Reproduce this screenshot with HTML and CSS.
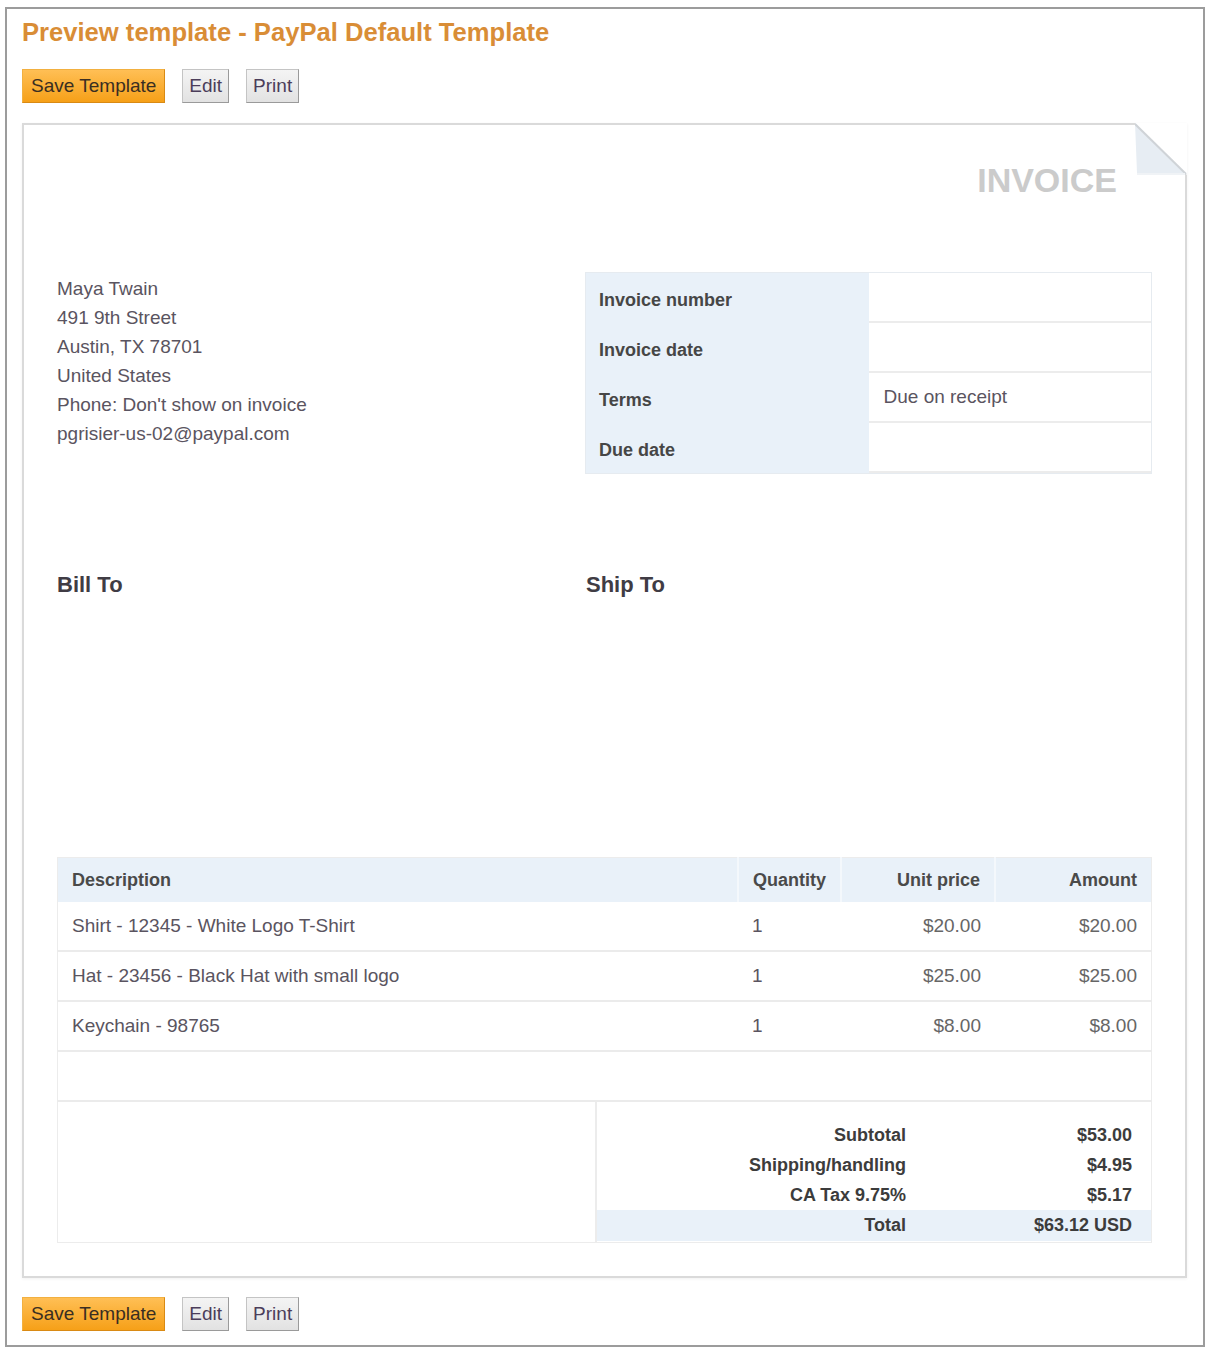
FILE: index.html
```html
<!DOCTYPE html>
<html lang="en">
<head>
    <meta charset="UTF-8">
    <title>Preview template - PayPal Default Template</title>
    <link rel="stylesheet" href="styles.css">
</head>
<body>
    <div class="frame">
        <h1 class="page-title">Preview template - PayPal Default Template</h1>
        <div class="toolbar">
            <button class="btn btn-primary">Save Template</button>
            <button class="btn">Edit</button>
            <button class="btn">Print</button>
        </div>

        <div class="paper">
            <svg class="dog-ear" width="52" height="52" viewBox="0 0 52 52">
                <polygon points="0,0 52,0 52,52" fill="#ffffff"/>
                <polygon points="0,0 50,50 2,50" fill="#e7edf3"/>
                <line x1="0" y1="1" x2="51" y2="51" stroke="#cfd3d7" stroke-width="2"/>
                <line x1="2" y1="51" x2="50" y2="51" stroke="#f0f3f6" stroke-width="2"/>
            </svg>

            <div class="invoice-word">INVOICE</div>

            <div class="top-grid">
                <div class="address">
                    <div>Maya Twain</div>
                    <div>491 9th Street</div>
                    <div>Austin, TX 78701</div>
                    <div>United States</div>
                    <div>Phone: Don't show on invoice</div>
                    <div>pgrisier-us-02@paypal.com</div>
                </div>
                <div class="info">
                    <div class="info-label">Invoice number</div>
                    <div class="info-value"></div>
                    <div class="info-label">Invoice date</div>
                    <div class="info-value"></div>
                    <div class="info-label">Terms</div>
                    <div class="info-value">Due on receipt</div>
                    <div class="info-label">Due date</div>
                    <div class="info-value"></div>
                </div>
            </div>

            <div class="parties">
                <h3>Bill To</h3>
                <h3>Ship To</h3>
            </div>

            <table class="items">
                <thead>
                    <tr>
                        <th class="col-desc">Description</th>
                        <th class="col-qty">Quantity</th>
                        <th class="col-price">Unit price</th>
                        <th class="col-amount">Amount</th>
                    </tr>
                </thead>
                <tbody>
                    <tr>
                        <td>Shirt - 12345 - White Logo T-Shirt</td>
                        <td>1</td>
                        <td class="num">$20.00</td>
                        <td class="num">$20.00</td>
                    </tr>
                    <tr>
                        <td>Hat - 23456 - Black Hat with small logo</td>
                        <td>1</td>
                        <td class="num">$25.00</td>
                        <td class="num">$25.00</td>
                    </tr>
                    <tr>
                        <td>Keychain - 98765</td>
                        <td>1</td>
                        <td class="num">$8.00</td>
                        <td class="num">$8.00</td>
                    </tr>
                    <tr class="empty-row">
                        <td colspan="4"></td>
                    </tr>
                </tbody>
            </table>

            <div class="totals">
                <div class="totals-note"></div>
                <div class="totals-box">
                    <div class="t-label">Subtotal</div>
                    <div class="t-value">$53.00</div>
                    <div class="t-label">Shipping/handling</div>
                    <div class="t-value">$4.95</div>
                    <div class="t-label">CA Tax 9.75%</div>
                    <div class="t-value">$5.17</div>
                    <div class="t-label t-total">Total</div>
                    <div class="t-value t-total">$63.12 USD</div>
                </div>
            </div>
        </div>

        <div class="toolbar toolbar-bottom">
            <button class="btn btn-primary">Save Template</button>
            <button class="btn">Edit</button>
            <button class="btn">Print</button>
        </div>
    </div>
</body>
</html>
```

FILE: styles.css
```css
body {
    margin: 0;
    background-color: #ffffff;
    font-family: 'Liberation Sans', Arial, sans-serif;
    color: #5a5460;
}
.frame {
    margin: 7px 2px 2px 5px;
    border: 2px solid #9c9c9c;
    padding: 8px 16px 14px 15px;
}
.page-title {
    margin: 0;
    font-size: 25.6px;
    line-height: 30px;
    font-weight: bold;
    color: #d98d36;
}
.toolbar {
    display: flex;
    gap: 17px;
    margin-top: 22px;
    margin-bottom: 20px;
}
.toolbar-bottom {
    margin-top: 19px;
    margin-bottom: 0;
}
.btn {
    height: 34px;
    padding: 0 6px;
    font-family: 'Liberation Sans', Arial, sans-serif;
    font-size: 19px;
    color: #4b3d5a;
    background: linear-gradient(#f4f4f4, #e2e2e2);
    border: 1px solid #c4c4c4;
    border-right-color: #9a9a9a;
    border-bottom-color: #9a9a9a;
    cursor: pointer;
}
.btn-primary {
    padding: 0 8px;
    color: #3a2e22;
    background: linear-gradient(#ffbf55, #f6a018);
    border-color: #f2b040;
    border-right-color: #d98a14;
    border-bottom-color: #d98a14;
}

/* invoice sheet */
.paper {
    position: relative;
    border: 2px solid #dadada;
    box-shadow: 0 1px 3px rgba(0, 0, 0, 0.06);
    padding: 35px 33px 33px 33px;
}
.dog-ear {
    position: absolute;
    top: -2px;
    right: -2px;
}
.invoice-word {
    text-align: right;
    margin-right: 35px;
    font-size: 34px;
    line-height: 40px;
    font-weight: bold;
    color: #cbcbcb;
}
.top-grid {
    display: grid;
    grid-template-columns: 528px 1fr;
    margin-top: 72px;
}
.address {
    padding-top: 2px;
    font-size: 19px;
    line-height: 29px;
}
.info {
    display: grid;
    grid-template-columns: 1fr 1fr;
    grid-auto-rows: 50px;
    background-color: #e9f1f9;
    border: 1px solid #e6ebf0;
}
.info-label {
    display: flex;
    align-items: center;
    padding: 4px 0 0 13px;
    font-size: 18px;
    font-weight: bold;
    color: #464646;
}
.info-value {
    display: flex;
    align-items: center;
    padding-left: 15px;
    background-color: #ffffff;
    border-bottom: 2px solid #ececec;
    font-size: 19px;
    color: #5a5460;
}
.parties {
    display: grid;
    grid-template-columns: 529px 1fr;
    height: 285px;
    margin-top: 98px;
}
.parties h3 {
    margin: 0;
    font-size: 22px;
    line-height: 26px;
    color: #403c44;
}

/* line items */
.items {
    width: 100%;
    border-collapse: collapse;
    border: 1px solid #ececec;
    font-size: 19px;
}
.items th {
    height: 44px;
    padding: 0 14px;
    background-color: #e9f1f9;
    font-size: 18px;
    color: #4a4a4a;
    text-align: left;
    border-left: 2px solid #f4f8fc;
}
.items th.col-desc {
    border-left: none;
}
.items .col-qty {
    width: 68px;
}
.items .col-price {
    width: 124px;
    text-align: right;
}
.items .col-amount {
    width: 127px;
    text-align: right;
}
.items td {
    height: 48px;
    padding: 0 14px;
    border-bottom: 2px solid #ebebeb;
    color: #5a5460;
}
.items td.num {
    text-align: right;
    color: #666666;
}
.empty-row td {
    height: 48px;
}
.totals {
    display: grid;
    grid-template-columns: 539px 1fr;
    height: 140px;
    border: 1px solid #ececec;
    border-top: none;
}
.totals-note {
    border-right: 2px solid #ececec;
}
.totals-box {
    display: grid;
    grid-template-columns: 309px 1fr;
    grid-template-rows: 30px 30px 30px 31px;
    padding-top: 18px;
    font-size: 18px;
    font-weight: bold;
    color: #3c3c3c;
}
.t-label,
.t-value {
    display: flex;
    align-items: center;
    justify-content: flex-end;
}
.t-value {
    padding-right: 19px;
}
.t-total {
    background-color: #e9f1f9;
}
```
